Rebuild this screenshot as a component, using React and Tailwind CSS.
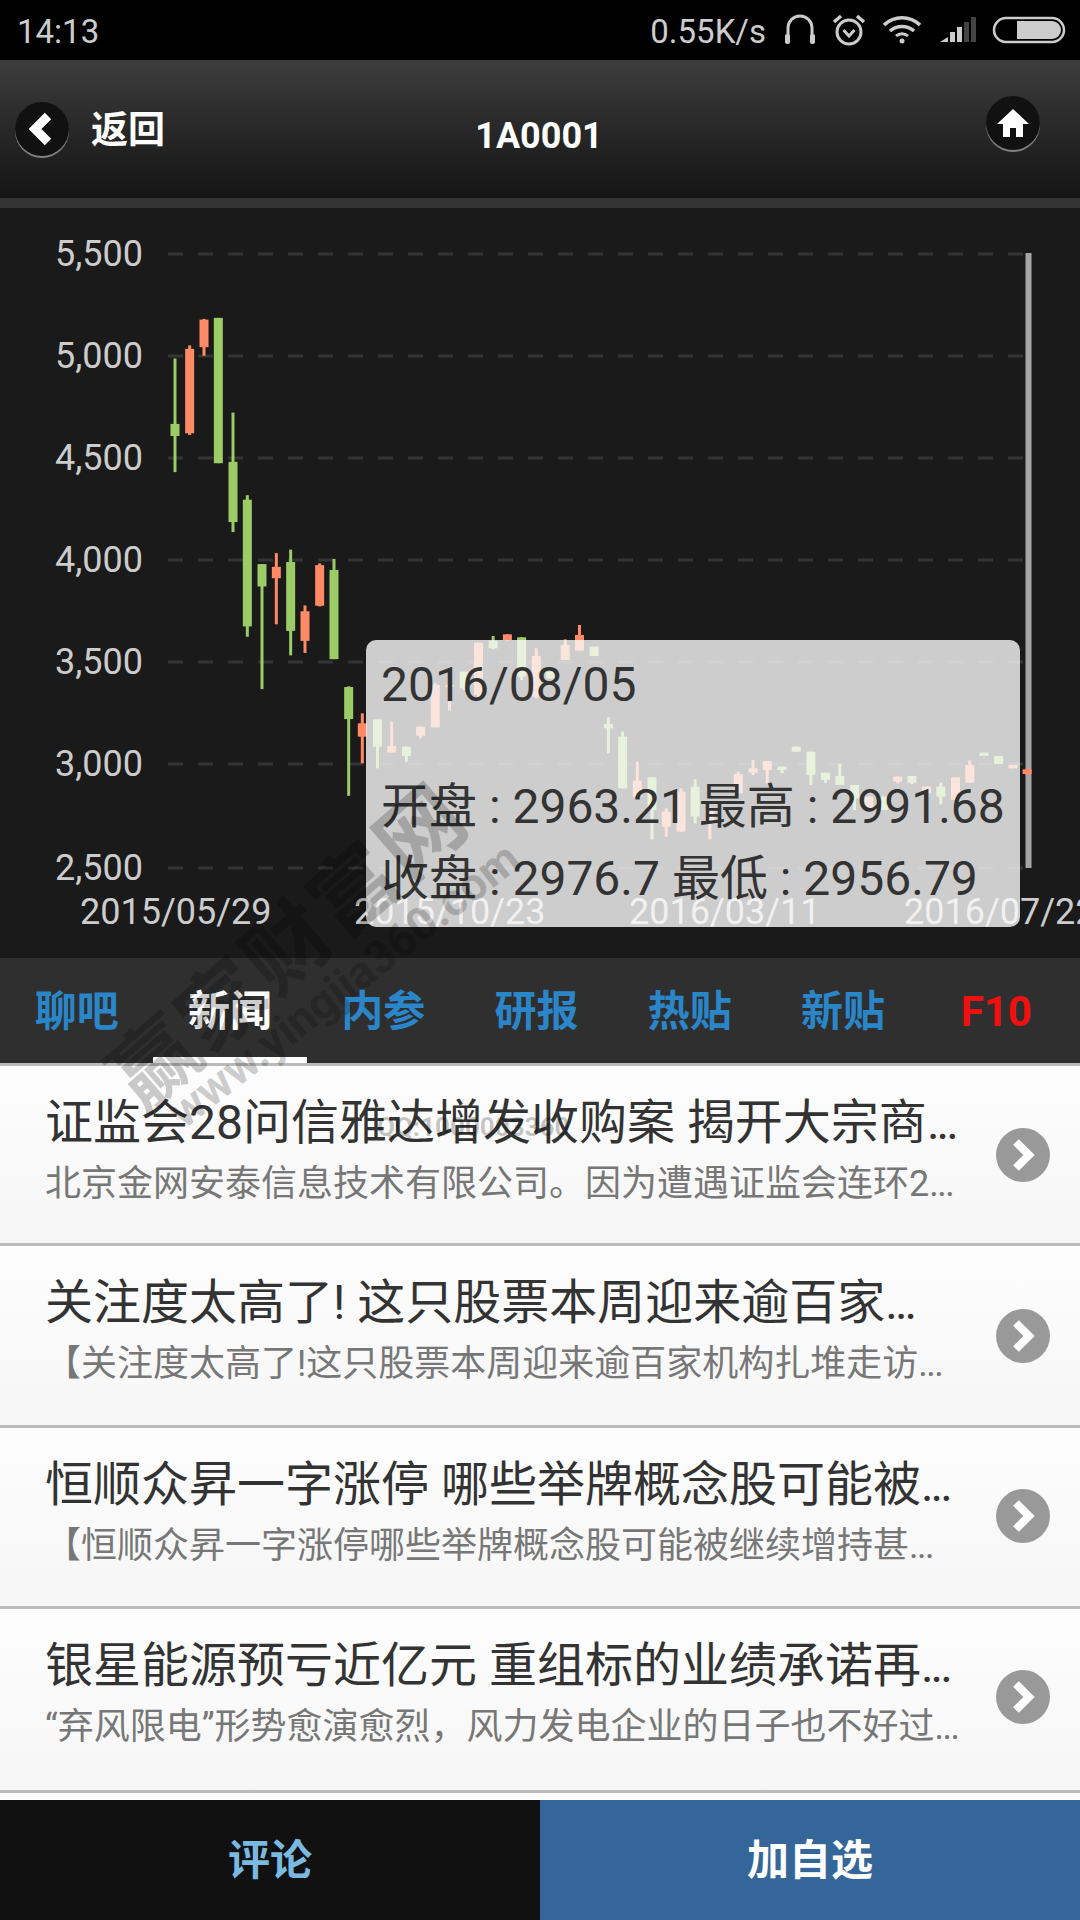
import React from "react";

const GREEN = "#9ccc65";
const RED = "#ff8a65";

// [cx, wickTop, wickBottom, bodyTop, bodyBottom, up]
const left = [
  [105, 228, 558, 418, 453, 0], [149, 190, 450, 200, 445, 1], [192, 113, 220, 115, 195, 1],
  [235, 110, 532, 110, 532, 0], [279, 385, 732, 528, 703, 0], [322, 625, 1036, 638, 1006, 0],
  [366, 825, 1188, 825, 890, 0], [409, 793, 1000, 833, 866, 1], [452, 783, 1090, 819, 1019, 0],
  [495, 945, 1083, 962, 1048, 1], [539, 823, 948, 828, 946, 1], [582, 810, 1101, 842, 1101, 0],
  [626, 1180, 1498, 1182, 1275, 0],
].map(([c, a, b, d, e, u]) => [140 + c / 3, 280 + a / 2.904, 280 + b / 2.904, 280 + d / 2.904, 280 + e / 2.904, u]);

const right = [
  [5, 280, 430, 310, 350, 1], [38, 298, 445, 298, 380, 0], [69, 305, 398, 378, 398, 1],
  [101, 380, 425, 380, 408, 0], [132, 320, 355, 320, 347, 1], [164, 190, 322, 195, 322, 1],
  [195, 195, 272, 195, 200, 1], [227, 155, 210, 155, 205, 0], [258, 68, 240, 68, 225, 1],
  [290, 48, 88, 62, 85, 0], [321, 43, 62, 43, 60, 1], [352, 52, 180, 52, 170, 0],
  [384, 85, 235, 108, 230, 1], [415, 155, 175, 155, 175, 0], [447, 58, 120, 75, 120, 1],
  [478, 15, 92, 45, 92, 1], [510, 80, 108, 80, 108, 0], [541, 292, 400, 312, 325, 0],
  [572, 335, 505, 350, 505, 0], [604, 425, 540, 482, 530, 1], [636, 472, 658, 472, 570, 0],
  [667, 565, 650, 575, 620, 1], [699, 505, 635, 515, 635, 1], [730, 478, 610, 500, 590, 0],
  [762, 560, 658, 570, 610, 1], [824, 455, 520, 462, 520, 1], [856, 420, 465, 445, 458, 1],
  [887, 423, 490, 423, 450, 1], [919, 440, 460, 440, 450, 0], [950, 380, 395, 380, 395, 0],
  [982, 395, 495, 395, 465, 0], [1014, 458, 488, 458, 480, 0], [1045, 432, 495, 468, 495, 0],
  [1077, 495, 570, 495, 535, 0], [1108, 530, 565, 530, 565, 1], [1140, 530, 570, 530, 570, 0],
  [1171, 470, 490, 470, 485, 1], [1202, 468, 492, 468, 488, 0], [1234, 500, 520, 500, 520, 1],
  [1265, 488, 553, 500, 530, 0], [1297, 472, 540, 472, 540, 1], [1328, 422, 488, 435, 488, 1],
  [1359, 398, 408, 398, 408, 0], [1391, 408, 432, 408, 432, 0], [1422, 435, 445, 435, 445, 1],
  [1453, 445, 465, 448, 462, 1],
].map(([c, a, b, d, e, u]) => [360 + c / 2.178, 620 + a / 3, 620 + b / 3, 620 + d / 3, 620 + e / 3, u]);

const candles = [...left, ...right];
const levels = [
  ["5,500", 254], ["5,000", 356], ["4,500", 458], ["4,000", 560], ["3,500", 662], ["3,000", 764], ["2,500", 868],
];
const dates = [["2015/05/29", 80], ["2015/10/23", 354], ["2016/03/11", 629], ["2016/07/22", 904]];

const tabs = ["聊吧", "新闻", "内参", "研报", "热贴", "新贴", "F10"];

const news = [
  ["证监会28问信雅达增发收购案 揭开大宗商", "北京金网安泰信息技术有限公司。因为遭遇证监会连环2", "h-[177px]", ""],
  ["关注度太高了! 这只股票本周迎来逾百家", "【关注度太高了!这只股票本周迎来逾百家机构扎堆走访", "h-[179px]", ""],
  ["恒顺众昇一字涨停 哪些举牌概念股可能被", "【恒顺众昇一字涨停哪些举牌概念股可能被继续增持甚", "h-[178px]", "mb-[2px]"],
  ["银星能源预亏近亿元 重组标的业绩承诺再", "“弃风限电”形势愈演愈烈，风力发电企业的日子也不好过", "h-[181px]", "mb-[6px]"],
];

function StatusIcons() {
  return (
    <div className="flex items-center">
      <svg width="34" height="32" viewBox="0 0 34 32" className="ml-[17px]" fill="none">
        <path d="M5 24V14a12 12 0 0 1 24 0v10" stroke="#ccc" strokeWidth="3" />
        <rect x="2" y="20" width="5" height="10" rx="2" fill="#ccc" />
        <rect x="27" y="20" width="5" height="10" rx="2" fill="#ccc" />
      </svg>
      <svg width="34" height="34" viewBox="0 0 34 34" className="ml-[15px]" fill="none" stroke="#ccc">
        <circle cx="17" cy="19" r="12" strokeWidth="3" />
        <path d="M11.5 17l5.5 6 5.5-6" strokeWidth="3" />
        <path d="M2 9l7-6M32 9l-7-6" strokeWidth="3.5" />
      </svg>
      <svg width="38" height="28" viewBox="0 0 38 28" className="ml-[17px]" fill="none" stroke="#ccc">
        <path d="M1 9a26 26 0 0 1 36 0" strokeWidth="3.5" />
        <path d="M7 15a18 18 0 0 1 24 0" strokeWidth="3.5" />
        <path d="M13 20a9 9 0 0 1 12 0" strokeWidth="3" />
        <circle cx="19" cy="25" r="2.5" fill="#ccc" stroke="none" />
      </svg>
      <svg width="38" height="26" viewBox="0 0 38 26" className="ml-[18px]">
        <path d="M1 25l8-5v5z" fill="#ccc" />
        <rect x="11" y="15" width="5" height="10" fill="#ccc" />
        <rect x="18" y="10" width="5" height="15" fill="#ccc" />
        <rect x="25" y="5" width="5" height="20" fill="#444" />
        <rect x="32" y="0" width="5" height="25" fill="#444" />
      </svg>
      <svg width="74" height="28" viewBox="0 0 74 28" className="ml-[15px]" fill="none">
        <rect x="2" y="2" width="70" height="24" rx="12" stroke="#ccc" strokeWidth="2.5" />
        <path d="M25 5h35a9 9 0 0 1 0 18H25z" fill="#ccc" />
      </svg>
    </div>
  );
}

function RoundButton({ children, className = "" }) {
  return (
    <div className={`flex h-[54px] w-[54px] items-center justify-center rounded-full bg-[#111] shadow-[0_2px_0_#808080] ${className}`}>
      {children}
    </div>
  );
}

function Chart() {
  return (
    <svg width="1080" height="750" viewBox="0 208 1080 750" className="block">
      {levels.map(([, y]) => (
        <line key={y} x1="168" x2="1026" y1={y} y2={y} stroke="#343434" strokeWidth="3" strokeDasharray="15 15" />
      ))}
      <rect x="1025.5" y="253" width="6" height="615" fill="#a6a6a6" />
      {candles.map(([x, a, b, d, e, u], i) => (
        <g key={i} fill={u ? RED : GREEN}>
          <rect x={x - 1.5} y={a} width="3" height={b - a} />
          <rect x={x - 4.5} y={d} width="9" height={e - d} />
        </g>
      ))}
      {levels.map(([t, y]) => (
        <text key={t} x="143" y={y + 12} textAnchor="end" fontSize="36" fill="#ccc" fontFamily="Roboto, sans-serif">
          {t}
        </text>
      ))}
      {dates.map(([t, x]) => (
        <text key={t} x={x} y="924" fontSize="36" fill="#ccc" fontFamily="Roboto, sans-serif">
          {t}
        </text>
      ))}
    </svg>
  );
}

export default function App() {
  return (
    <div className="relative h-[1920px] w-[1080px] overflow-hidden bg-white font-['Roboto','Noto_Sans_CJK_SC',sans-serif]">
      {/* status bar */}
      <div className="flex h-[60px] items-center justify-between bg-black pl-[17px] pr-[14px] text-[33px] text-[#ccc]">
        <span className="mt-[4px]">14:13</span>
        <div className="flex items-center">
          <span className="mt-[4px]">0.55K/s</span>
          <StatusIcons />
        </div>
      </div>

      {/* header */}
      <div className="flex h-[138px] items-center justify-between bg-linear-to-b from-[#3d3d3d] to-[#151515] pl-[15px] pr-[40px] text-white">
        <div className="flex w-[300px] items-center">
          <RoundButton>
            <svg width="30" height="36" viewBox="0 0 30 36" fill="none">
              <path d="M21 5L8 18l13 13" stroke="#fff" strokeWidth="9" />
            </svg>
          </RoundButton>
          <span className="ml-[22px] mt-[4px] text-[37px] font-bold">返回</span>
        </div>
        <span className="ml-[23px] mt-[14px] text-[36px] font-bold">1A0001</span>
        <div className="flex w-[300px] justify-end">
          <RoundButton className="mb-[12px]">
            <svg width="34" height="30" viewBox="0 0 34 30">
              <path d="M17 1L1 16h6v13h7v-9h6v9h7V16h6z" fill="#fff" />
            </svg>
          </RoundButton>
        </div>
      </div>
      <div className="h-[10px] bg-[#333]" />

      {/* chart */}
      <div className="relative h-[750px] bg-[#1a1a1a]">
        <Chart />
        <div className="absolute left-[366px] top-[432px] h-[287px] w-[654px] rounded-[10px] bg-[rgba(250,250,250,0.8)] pl-[15px] pt-[9px] text-[48px] text-[#333]">
          <div className="leading-[72px]">2016/08/05</div>
          <div className="mt-[50px] whitespace-nowrap leading-[72px]">开盘 : 2963.21 最高 : 2991.68</div>
          <div className="whitespace-nowrap leading-[72px]">收盘 : 2976.7 最低 : 2956.79</div>
        </div>
      </div>

      {/* tabs */}
      <div className="h-[105px] bg-[#2f2f2f]">
        <div className="grid h-full w-[1073px] grid-cols-7">
          {tabs.map((t, i) => (
            <div
              key={t}
              className={`flex items-center justify-center border-b-[6px] pt-[8px] text-[42px] font-bold ${
                i === 1
                  ? "border-white text-white"
                  : i === 6
                    ? "border-transparent text-[#f01010]"
                    : "border-transparent text-[#2a86c8]"
              }`}
            >
              {t}
            </div>
          ))}
        </div>
      </div>
      <div className="h-[3px] bg-[#bbb]" />

      {/* news */}
      {news.map(([title, sub, h, nudge]) => (
        <div key={title}>
          <div className={`flex items-center justify-between bg-linear-to-b from-[#fdfdfd] to-[#f6f6f6] pl-[45px] pr-[30px] ${h}`}>
            <div className="self-start whitespace-nowrap pt-[27px]">
              <div className="text-[48px] leading-[60px] text-[#333]">
                {title}
                <span className="tracking-[-3px]">...</span>
              </div>
              <div className="mt-[1px] text-[36px] leading-[60px] text-[#777]">
                {sub}
                <span className="tracking-[-1.5px]">...</span>
              </div>
            </div>
            <div className={`flex h-[54px] w-[54px] shrink-0 items-center justify-center rounded-full bg-[#999] ${nudge}`}>
              <svg width="26" height="36" viewBox="0 0 26 36" fill="none">
                <path d="M6 5l13 13L6 31" stroke="#fff" strokeWidth="8" />
              </svg>
            </div>
          </div>
          <div className="h-[3px] bg-[#bbb]" />
        </div>
      ))}

      {/* bottom bar */}
      <div className="absolute bottom-0 left-0 grid h-[120px] w-full grid-cols-2 text-[42px] font-bold">
        <div className="flex items-center justify-center bg-[#111] text-[#7ab9e0]">评论</div>
        <div className="flex items-center justify-center bg-[#346699] text-white">加自选</div>
      </div>

      {/* watermark */}
      <div className="pointer-events-none absolute left-[290px] top-[948px] -translate-x-1/2 -translate-y-1/2 rotate-[-41deg] whitespace-nowrap text-[85px] font-bold tracking-[3px] text-[rgba(0,0,0,0.2)]">
        赢家财富网
      </div>
      <div className="pointer-events-none absolute left-[344px] top-[985px] -translate-x-1/2 -translate-y-1/2 rotate-[-38deg] whitespace-nowrap text-[46px] font-bold text-[rgba(0,0,0,0.2)]">
        www.yingjia360.com
      </div>
      <div className="pointer-events-none absolute left-[377px] top-[1108px] whitespace-nowrap text-[26px] font-bold text-[rgba(0,0,0,0.22)]">
        QQ:1000003360
      </div>
    </div>
  );
}
